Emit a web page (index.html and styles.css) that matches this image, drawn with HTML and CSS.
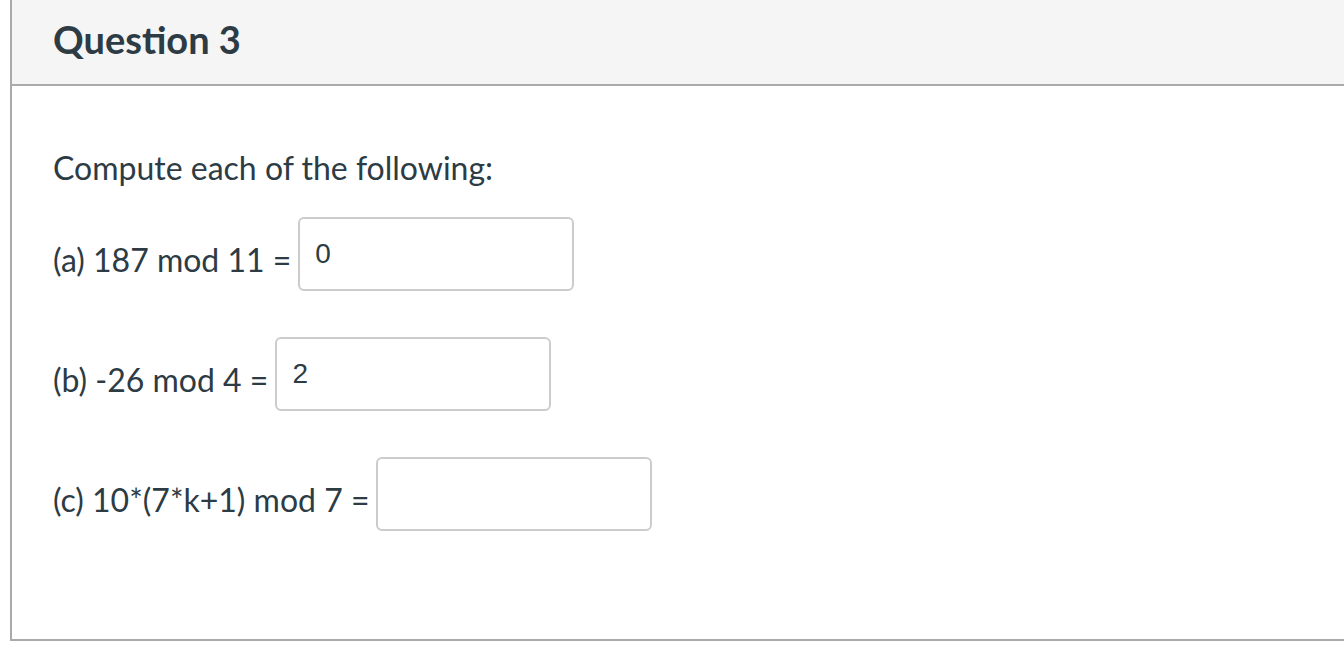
FILE: index.html
```html
<!DOCTYPE html>
<html lang="en">
<head>
<meta charset="utf-8">
<title>Question 3</title>
<link rel="stylesheet" href="styles.css">
</head>
<body>
<div class="question">
  <div class="question-header">
    <h2 class="question-title">Question 3</h2>
  </div>
  <div class="question-body">
    <p class="prompt">Compute each of the following:</p>
    <div class="answers">
      <div class="answer-row">
        <span class="label">(a) 187 mod 11 =</span>
        <input class="answer-input" type="text" value="0">
      </div>
      <div class="answer-row">
        <span class="label">(b) -26 mod 4 =</span>
        <input class="answer-input" type="text" value="2">
      </div>
      <div class="answer-row">
        <span class="label">(c) 10*(7*k+1) mod 7 =</span>
        <input class="answer-input" type="text" value="">
      </div>
    </div>
  </div>
</div>
</body>
</html>
```
FILE: styles.css
```css
html, body {
  margin: 0;
  padding: 0;
  background: #ffffff;
}
body {
  font-family: Lato, "Open Sans", sans-serif;
  color: #2d3b45;
  overflow: hidden;
}
.question {
  margin-left: 10px;
  border-left: 2px solid #aaaaaa;
  border-bottom: 2px solid #aaaaaa;
}
.question-header {
  height: 84px;
  background: #f5f5f5;
  border-bottom: 2px solid #aaaaaa;
  display: flex;
  align-items: center;
  padding-left: 41px;
}
.question-title {
  margin: 0;
  font-size: 38px;
  font-weight: 700;
  line-height: 1.2;
  padding-bottom: 4px;
}
.question-body {
  padding: 63px 0 108px 41px;
}
.prompt {
  margin: 0 0 30px 0;
  font-size: 32px;
  line-height: 1.2;
}
.answers {
  display: flex;
  flex-direction: column;
  gap: 46px;
}
.answer-row {
  display: flex;
  align-items: center;
  gap: 7px;
  font-size: 32px;
}
.label {
  line-height: 1.2;
  padding-top: 12px;
}
.answer-input {
  box-sizing: border-box;
  width: 276px;
  height: 74px;
  border: 2px solid #cccccc;
  border-radius: 6px;
  padding: 0 0 0 15px;
  font-family: "Liberation Sans", Arial, sans-serif;
  font-size: 28px;
  color: #2d3b45;
  background: #ffffff;
  outline: none;
  margin: 0;
}
```
